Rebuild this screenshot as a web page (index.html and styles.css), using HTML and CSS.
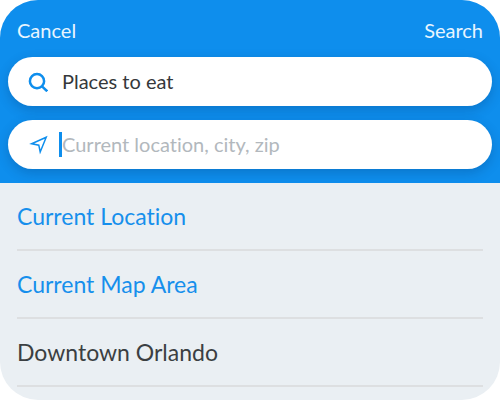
FILE: index.html
```html
<!DOCTYPE html>
<html lang="en">
<head>
<meta charset="utf-8">
<meta name="viewport" content="width=device-width, initial-scale=1">
<title>Search</title>
<link rel="stylesheet" href="styles.css">
</head>
<body>
<main class="screen">
  <form class="header">
    <div class="actions">
      <button class="action" type="button">Cancel</button>
      <button class="action" type="submit">Search</button>
    </div>
    <label class="field">
      <svg class="icon" viewBox="0 0 20 20" aria-hidden="true">
        <circle cx="9" cy="9.2" r="7.1" fill="none" stroke="currentColor" stroke-width="2.5"/>
        <path d="M14 14.4l5.2 4.9" fill="none" stroke="currentColor" stroke-width="2.5"/>
      </svg>
      <input class="input" type="text" aria-label="Search term" value="Places to eat">
    </label>
    <label class="field">
      <svg class="icon" viewBox="0 0 20 20" aria-hidden="true">
        <path d="M18.2 2.2L3.6 8.8L10.8 10.2L12.2 17Z" fill="none" stroke="currentColor" stroke-width="1.5" stroke-linejoin="miter"/>
      </svg>
      <span class="caret"></span>
      <input class="input" type="text" aria-label="Location" placeholder="Current location, city, zip">
    </label>
  </form>
  <ul class="list">
    <li class="row"><a class="link" href="#location">Current Location</a></li>
    <li class="row"><a class="link" href="#map">Current Map Area</a></li>
    <li class="row"><a class="link place" href="#orlando">Downtown Orlando</a></li>
  </ul>
</main>
</body>
</html>
```
FILE: styles.css
```css
* {
  box-sizing: border-box;
}

body {
  margin: 0;
  background: #fff;
  font-family: Lato, "Open Sans", sans-serif;
  font-variant-ligatures: none;
}

.screen {
  min-height: 100vh;
  overflow: hidden;
  border-radius: 38px;
  background: #eaeff3;
}

.header {
  display: flex;
  flex-direction: column;
  gap: 14px;
  padding: 16px 8px 14px;
  background: #0e8eed;
}

.actions {
  display: flex;
  justify-content: space-between;
  padding: 0 9px;
  margin-bottom: -3px;
}

.action {
  height: 30px;
  padding: 0 0 2px;
  border: 0;
  background: none;
  color: #e8f5ff;
  font: 20px/28px Lato, "Open Sans", sans-serif;
}

.field {
  display: flex;
  align-items: center;
  height: 49px;
  padding: 0 20px;
  border-radius: 25px;
  background: #fff;
  box-shadow: 0 4px 12px rgba(0, 40, 90, 0.24);
}

.icon {
  flex: none;
  width: 20px;
  height: 20px;
  margin-right: 14px;
  color: #0e8eed;
}

.caret {
  width: 3px;
  height: 25px;
  margin: 0 0 0 -3px;
  background: #0e8eed;
}

.input {
  flex: 1;
  min-width: 0;
  padding: 0 0 2px;
  border: 0;
  outline: 0;
  background: none;
  color: #35383b;
  font: 20px/28px Lato, "Open Sans", sans-serif;
  font-variant-ligatures: none;
}

.input::placeholder {
  color: #b2b8bd;
  opacity: 1;
}

.list {
  margin: 0;
  padding: 0 17px;
  list-style: none;
}

.row {
  display: flex;
  align-items: center;
  height: 68px;
  border-bottom: 2px solid #dddfe1;
}

.link {
  color: #168fec;
  font-size: 23px;
  line-height: 32px;
  text-decoration: none;
}

.place {
  color: #3b3f42;
}
```
